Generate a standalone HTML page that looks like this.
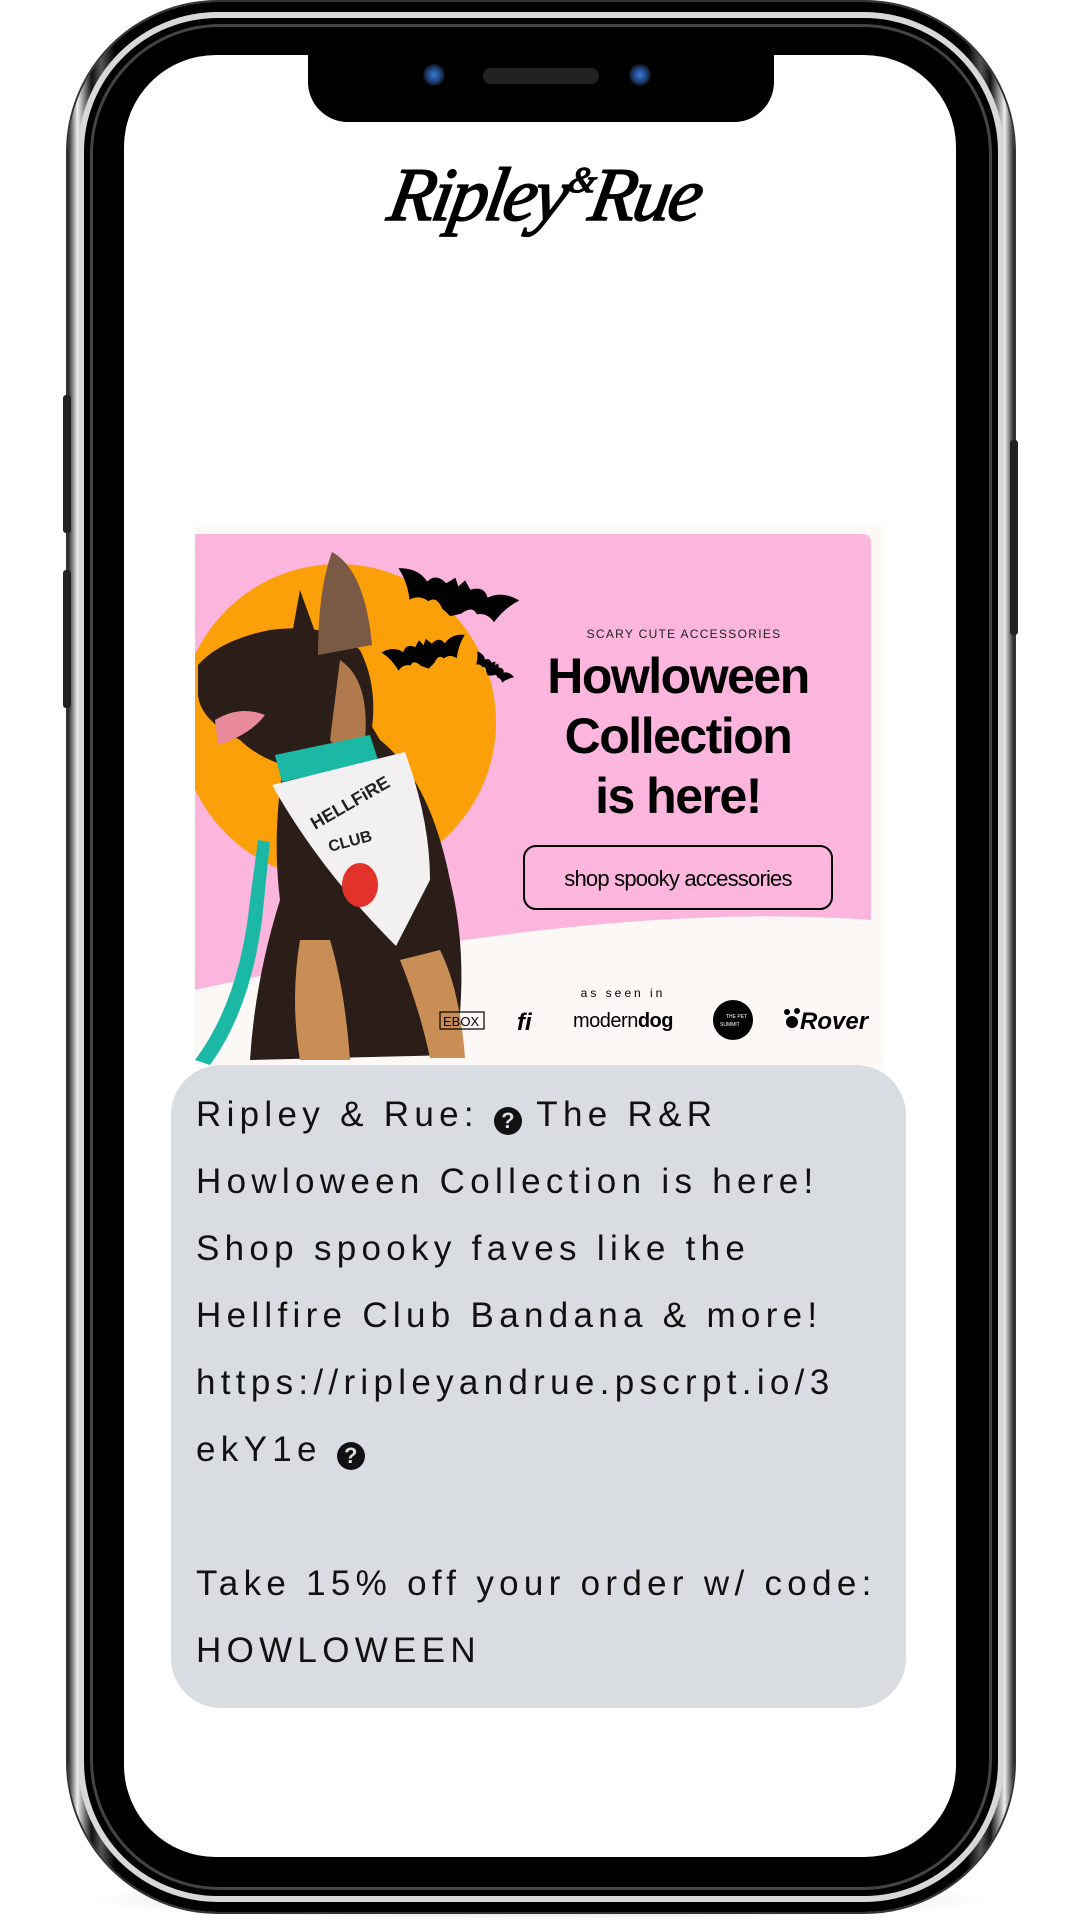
<!DOCTYPE html>
<html><head><meta charset="utf-8"><style>
*{margin:0;padding:0;box-sizing:border-box}
body{width:1080px;height:1920px;background:#fff;position:relative;overflow:hidden;font-family:"Liberation Sans",sans-serif}
.abs{position:absolute}
.shadow{left:80px;top:1880px;width:920px;height:40px;border-radius:50%;background:radial-gradient(ellipse at center,rgba(0,0,0,.25),rgba(0,0,0,0) 70%)}
.rim{left:68px;top:2px;width:946px;height:1910px;border-radius:150px;background:linear-gradient(90deg,#222 0,#eee 1%,#111 2.5%,#555 3.5%,#000 5%,#000 95%,#555 96.5%,#111 97.5%,#eee 99%,#222 100%);box-shadow:0 0 0 2px #333}
.rim2{left:78px;top:12px;width:926px;height:1890px;border-radius:140px;border:6px solid #d8d8d8;background:#000}
.rim3{left:90px;top:24px;width:902px;height:1866px;border-radius:130px;border:3px solid #444;background:#000}
.screen{left:124px;top:55px;width:832px;height:1802px;border-radius:92px;background:#fff;overflow:hidden}
.notch{left:308px;top:40px;width:466px;height:82px;background:#000;border-radius:0 0 40px 40px}
.btn{border-radius:3px;background:#222}
.q{display:inline-block;width:28px;height:28px;border-radius:50%;background:#111;color:#d9dde1;font-size:22px;line-height:28px;text-align:center;letter-spacing:0;font-weight:bold;vertical-align:-2px}
</style></head><body>
<div class="abs shadow"></div>
<div class="abs rim"></div>
<div class="abs rim2"></div>
<div class="abs rim3"></div>
<div class="abs btn" style="left:63px;top:395px;width:8px;height:138px"></div>
<div class="abs btn" style="left:63px;top:570px;width:8px;height:138px"></div>
<div class="abs btn" style="left:1010px;top:440px;width:8px;height:195px"></div>
<div class="abs screen"></div>
<div class="abs notch"></div>
<div class="abs" style="left:423px;top:64px;width:22px;height:22px;border-radius:50%;background:radial-gradient(circle,#3d7bd0 0,#1b3f7a 45%,#111 70%)"></div>
<div class="abs" style="left:629px;top:64px;width:22px;height:22px;border-radius:50%;background:radial-gradient(circle,#3d7bd0 0,#1b3f7a 45%,#111 70%)"></div>
<div class="abs" style="left:483px;top:68px;width:116px;height:16px;border-radius:8px;background:#222"></div>

<div class="abs" style="left:380px;top:152px;width:330px;text-align:center;font-family:'Liberation Serif',serif;font-style:italic;font-size:76px;letter-spacing:-3px;color:#000;transform:skewX(-10deg);-webkit-text-stroke:1.5px #000">Ripley<span style="font-size:36px;vertical-align:28px">&amp;</span>Rue</div>

<svg class="abs" style="left:195px;top:527px" width="688" height="538" viewBox="195 527 688 538">
<defs><path id="bat" d="M-50 -10 Q-35 -15 -25 -5 Q-20 -15 -10 -8 L-4 -15 L0 -8 L4 -15 L10 -8 Q20 -15 25 -5 Q35 -15 50 -10 Q40 0 35 15 Q28 8 20 12 Q15 5 8 15 L0 20 L-8 15 Q-15 5 -20 12 Q-28 8 -35 15 Q-40 0 -50 -10Z"/></defs>
<rect x="195" y="527" width="688" height="538" fill="#fcf8f6"/>
<path d="M195 534 H862 Q871 534 871 543 V920 Q600 900 195 990 Z" fill="#fcb5dc"/>
<clipPath id="c"><path d="M195 534 H871 V920 Q600 900 195 990 Z"/></clipPath>
<circle cx="338" cy="722" r="158" fill="#fca00a" clip-path="url(#c)"/>
<path d="M195 1060 Q240 1000 250 900 L258 840 L270 842 L262 920 Q250 1010 210 1065 Z" fill="#1cb8a6"/>
<path d="M290 730 Q310 700 350 690 L380 740 Q430 780 450 880 Q470 960 455 1055 L250 1060 Q255 980 280 900 Q270 820 290 730Z" fill="#2b1e18"/>
<path d="M300 940 Q290 1000 300 1060 L350 1060 Q345 990 330 940Z M400 960 Q420 1010 430 1058 L465 1058 Q460 990 440 950Z" fill="#c98e55"/>
<path d="M198 665 Q220 640 270 630 Q330 622 360 650 Q380 690 370 740 Q340 770 300 770 Q260 760 240 740 Q200 720 198 695Z" fill="#2b1e18"/>
<path d="M318 655 Q318 590 332 552 Q365 570 372 645 Z" fill="#7a5a45"/>
<path d="M290 645 L300 590 L318 640Z" fill="#2b1e18"/>
<path d="M215 720 Q240 705 265 715 Q250 735 218 745Z" fill="#e88a9c"/>
<path d="M340 660 Q370 680 365 740 Q345 760 330 740Z" fill="#b07a4c"/>
<path d="M275 755 L370 735 L378 760 L282 782Z" fill="#1cb8a6"/>
<path d="M272 785 L405 752 Q430 820 430 880 L396 946 Q320 870 272 785Z" fill="#f2f0f0"/>
<text x="315" y="830" font-family="Liberation Sans" font-weight="bold" font-size="18" fill="#222" transform="rotate(-30 315 830)">HELLFiRE</text>
<text x="330" y="852" font-family="Liberation Sans" font-weight="bold" font-size="16" fill="#222" transform="rotate(-15 330 852)">CLUB</text>
<ellipse cx="360" cy="885" rx="18" ry="22" fill="#e2332b"/>
<use href="#bat" transform="translate(456 595) rotate(15) scale(1.25 1.1)" fill="#000"/>
<use href="#bat" transform="translate(425 652) rotate(-12) scale(0.85)" fill="#000"/>
<use href="#bat" transform="translate(493 668) rotate(35) scale(0.45)" fill="#000"/>
<text x="684" y="638" text-anchor="middle" font-size="12" letter-spacing="1.3" fill="#222">SCARY CUTE ACCESSORIES</text>
<text x="678" y="693" text-anchor="middle" font-size="50" font-weight="bold" letter-spacing="-1.5" fill="#000">Howloween</text>
<text x="678" y="753" text-anchor="middle" font-size="50" font-weight="bold" letter-spacing="-1.5" fill="#000">Collection</text>
<text x="678" y="813" text-anchor="middle" font-size="50" font-weight="bold" letter-spacing="-1.5" fill="#000">is here!</text>
<rect x="524" y="846" width="308" height="63" rx="12" fill="none" stroke="#000" stroke-width="2"/>
<text x="678" y="886" text-anchor="middle" font-size="22" letter-spacing="-0.8" fill="#000">shop spooky accessories</text>
<text x="623" y="997" text-anchor="middle" font-size="12" letter-spacing="3" fill="#000">as seen in</text>
<rect x="440" y="1012" width="44" height="17" fill="none" stroke="#000" stroke-width="1.2"/>
<text x="443" y="1026" font-size="13" fill="#000">EBOX</text>
<text x="517" y="1030" font-size="24" font-weight="bold" font-style="italic" fill="#000">fi</text>
<text x="573" y="1027" font-size="20" fill="#000" letter-spacing="-0.5">modern<tspan font-weight="bold">dog</tspan></text>
<circle cx="733" cy="1020" r="20" fill="#000"/>
<text x="726" y="1018" font-size="5" fill="#fff">THE PET</text>
<text x="720" y="1026" font-size="5" fill="#fff">SUMMIT</text>
<circle cx="792" cy="1022" r="6" fill="#000"/><circle cx="787" cy="1012" r="3" fill="#000"/><circle cx="797" cy="1011" r="3" fill="#000"/>
<text x="800" y="1029" font-size="24" font-weight="bold" font-style="italic" fill="#000">Rover</text>
</svg>

<div class="abs" style="left:171px;top:1065px;width:735px;height:643px;border-radius:50px;background:#d9dde1"></div>
<div class="abs" style="left:196px;top:1081px;width:720px;font-size:35px;line-height:67px;letter-spacing:5.3px;color:#111;white-space:nowrap">
Ripley &amp; Rue: <span class="q">?</span> The R&amp;R<br>
Howloween Collection is here!<br>
Shop spooky faves like the<br>
Hellfire Club Bandana &amp; more!<br>
https://ripleyandrue.pscrpt.io/3<br>
ekY1e <span class="q">?</span><br>
<br>
Take 15% off your order w/ code:<br>
HOWLOWEEN
</div>
</body></html>
